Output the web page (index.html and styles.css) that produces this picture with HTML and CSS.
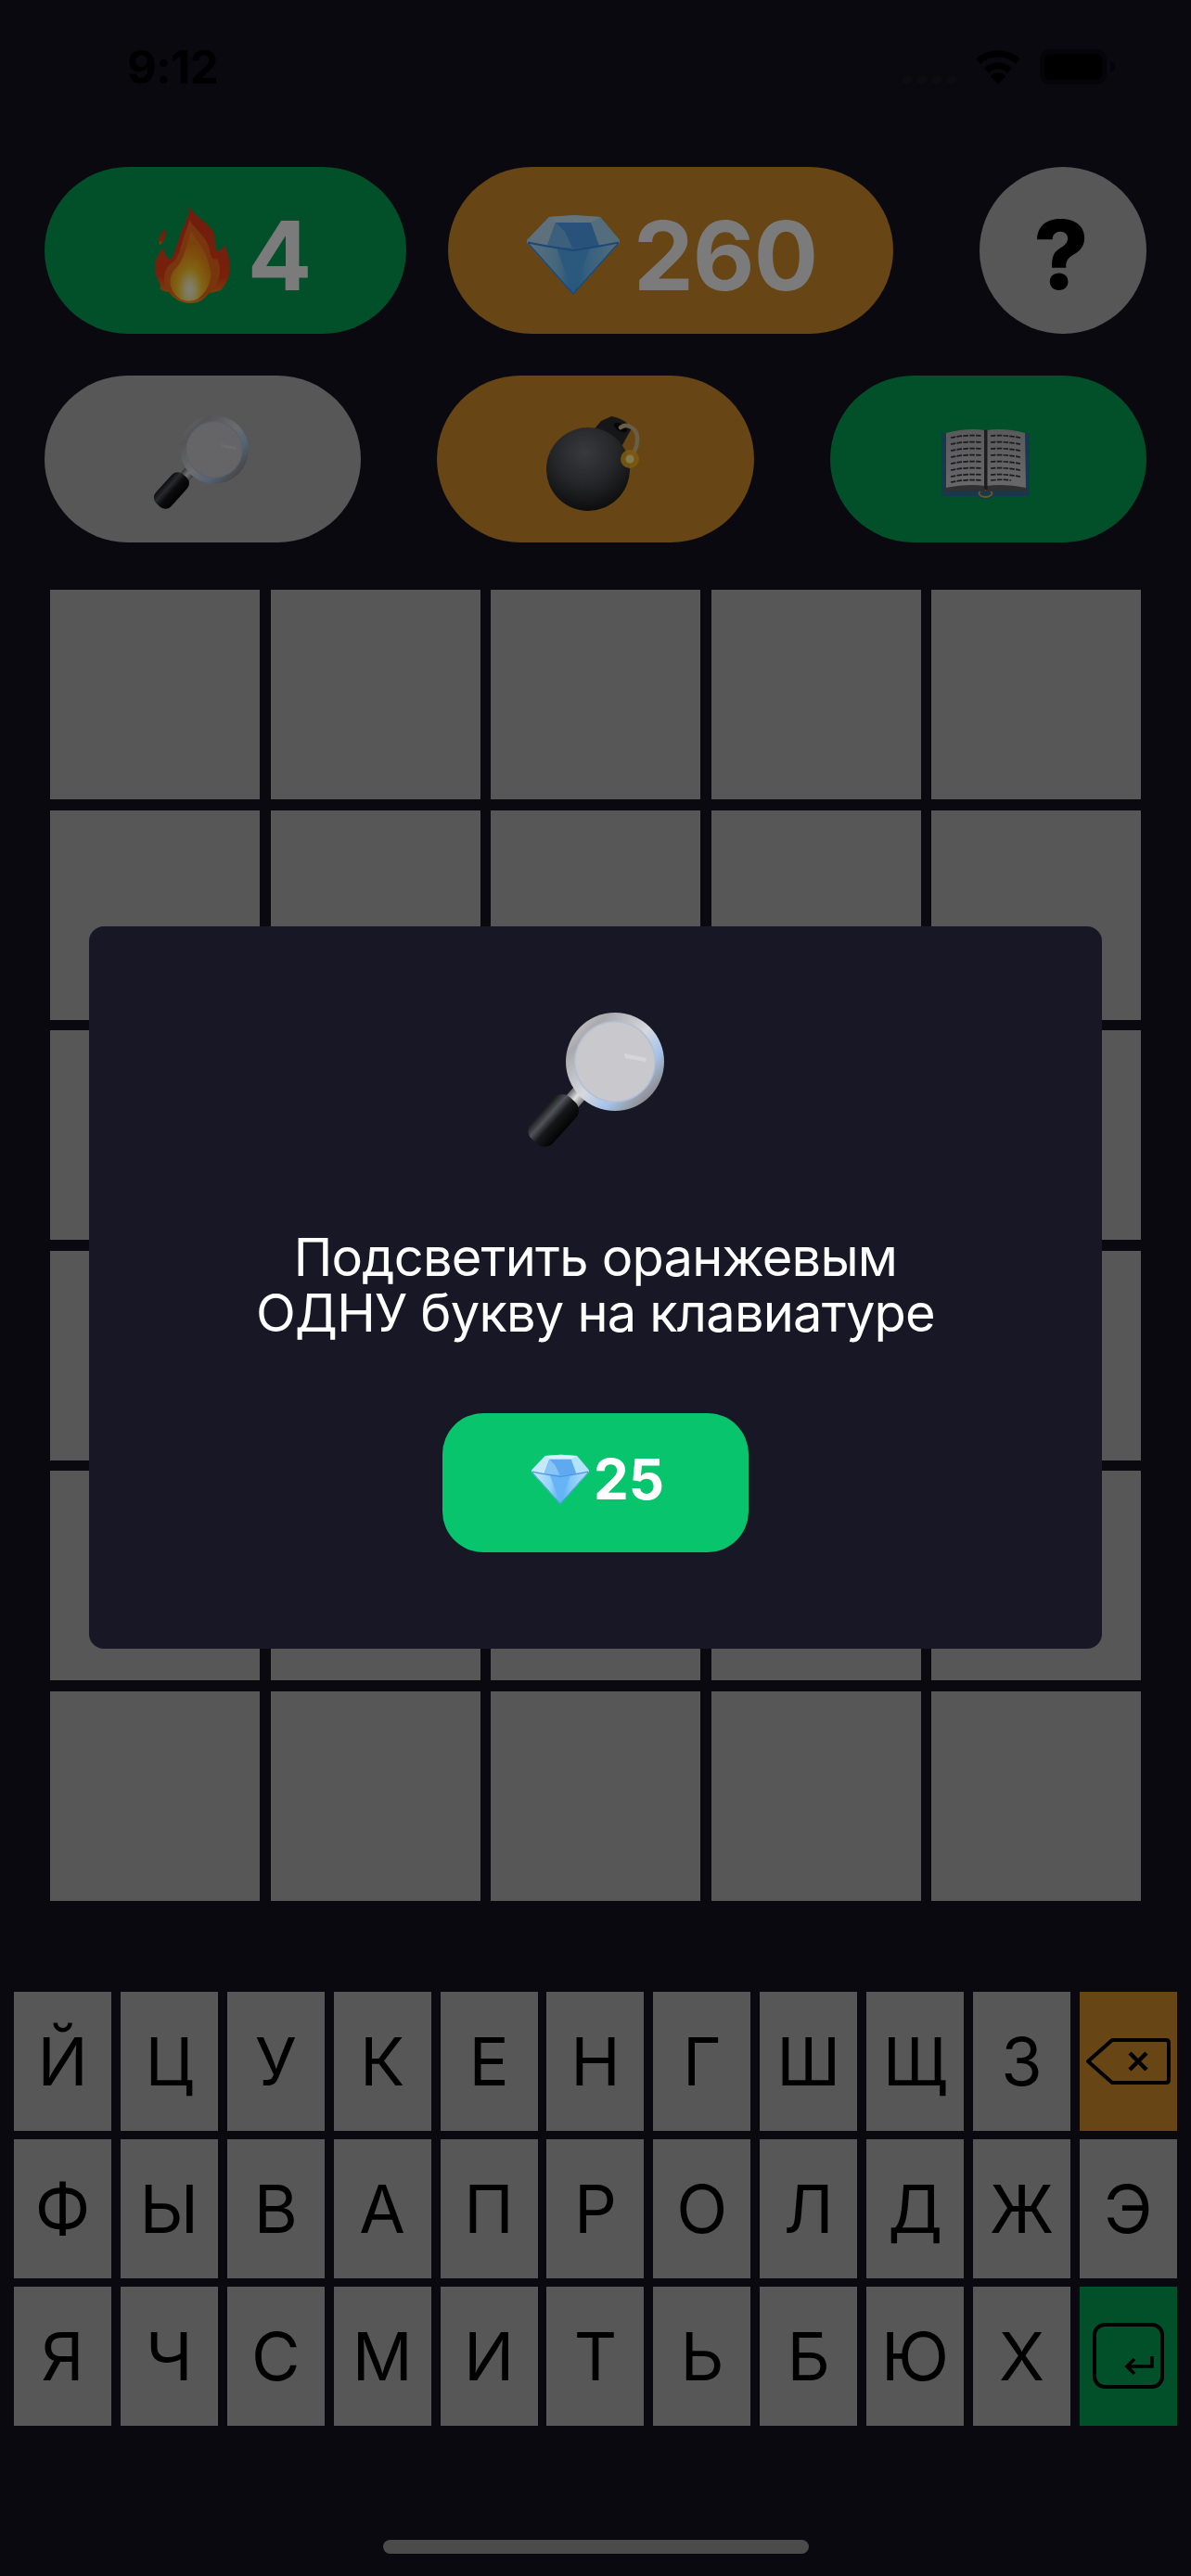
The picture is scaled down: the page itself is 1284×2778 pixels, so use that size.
FILE: index.html
```html
<!DOCTYPE html>
<html lang="ru">
<head>
<meta charset="utf-8">
<title>Подсказка</title>
<link rel="stylesheet" href="styles.css">
</head>
<body>
<svg class="defs" aria-hidden="true">
  <defs>
    <radialGradient id="flameCore" cx="48%" cy="84%" r="66%">
      <stop offset="0" stop-color="#fffdf0"/><stop offset=".2" stop-color="#fff0a8"/><stop offset=".45" stop-color="#ffc928"/><stop offset=".8" stop-color="#fb9a16"/><stop offset="1" stop-color="#f5851a"/>
    </radialGradient>
    <linearGradient id="flameOuter" x1="0" y1="0" x2="0" y2="1">
      <stop offset="0" stop-color="#e23a1a"/><stop offset=".72" stop-color="#ee3f18"/><stop offset="1" stop-color="#ff9a12"/>
    </linearGradient>
    <linearGradient id="gemLow" x1="0" y1="0" x2="1" y2="0">
      <stop offset="0" stop-color="#c6e9fe"/><stop offset=".32" stop-color="#99d4f9"/><stop offset=".5" stop-color="#55aef6"/><stop offset=".68" stop-color="#82c8f8"/><stop offset="1" stop-color="#b6e1fc"/>
    </linearGradient>
    <linearGradient id="steel" x1="0" y1="0" x2="1" y2="1">
      <stop offset="0" stop-color="#dadadd"/><stop offset=".22" stop-color="#a9a9ad"/><stop offset=".5" stop-color="#d5d9de"/><stop offset=".68" stop-color="#a4c4ea"/><stop offset=".85" stop-color="#8f8f90"/><stop offset="1" stop-color="#b3b0ad"/>
    </linearGradient>
    <linearGradient id="neck" x1="0" y1="0" x2="1" y2="0">
      <stop offset="0" stop-color="#6d6d70"/><stop offset=".5" stop-color="#e0e0e2"/><stop offset="1" stop-color="#7c7c7e"/>
    </linearGradient>
    <linearGradient id="handle" x1="0" y1="0" x2="1" y2="0">
      <stop offset="0" stop-color="#1a1a1c"/><stop offset=".28" stop-color="#50535a"/><stop offset=".55" stop-color="#17171a"/><stop offset="1" stop-color="#030303"/>
    </linearGradient>
    <radialGradient id="bombBall" cx="46%" cy="30%" r="74%">
      <stop offset="0" stop-color="#6e7278"/><stop offset=".5" stop-color="#4a4d52"/><stop offset="1" stop-color="#141416"/>
    </radialGradient>
    <linearGradient id="page" x1="0" y1="0" x2="0" y2="1">
      <stop offset="0" stop-color="#b4b4b9"/><stop offset="1" stop-color="#cfcfd3"/>
    </linearGradient>

    <symbol id="i-flame" viewBox="0 0 81 104">
      <path fill="url(#flameOuter)" d="M37.500 0C42 10 54 15 61 24C66 31 65 40 66 48C70 48 73 45 75 41C79 50 81 58 81 66C81 76 76 84 71 90C66 91 61 93 58 93C53 101 45 104 37 104C29 104 20 99 15 92C11 92 8 90 5 88C7 86 6 84 4 80C1 75 0 70 0 64C0 56 5 50 9 44C10 50 12 55 17 57C22 50 24 38 29 26C32 18 37 10 37.500 0Z"/>
      <path fill="url(#flameOuter)" d="M11 24C13 29 11 37 5 41C3 36 6 28 11 24Z"/>
      <path fill="#ef6a1c" d="M37 14C44 26 56 32 59 46C60 54 62 58 67 56C72 66 71 76 64 87C56 98 46 102 37 102C27 102 16 96 11 84C8 74 12 64 19 60C25 56 27 46 30 36C32 28 36 22 37 14Z"/>
      <path fill="url(#flameCore)" d="M39 26C45 38 56 46 58 62C64 74 58 90 48 98C42 103 31 103 25 98C15 90 14 76 21 68C30 60 34 44 39 26Z"/>
    </symbol>

    <symbol id="i-gem" viewBox="0 0 100 86">
      <polygon fill="#a0daf9" points="0,27 24,2 51,0 79,2 100,27 100,30 50,38 0,30"/>
      <polygon fill="#c7e9fd" points="0,27 24,2 31,8 22,33 0,30"/>
      <polygon fill="#b4e1fc" points="79,2 100,27 100,30 78,33 69,8"/>
      <polygon fill="#d6f0fe" points="24,2 51,0 79,2 69,8 31,8"/>
      <polygon fill="#5fa9ee" points="31,8 69,8 78,33 50,37 22,33"/>
      <polygon fill="#88c4f4" points="31,8 22,33 50,37 41,18"/>
      <polygon fill="url(#gemLow)" points="0,30 22,33 50,38 78,33 100,30 50,86"/>
      <polygon fill="#66b4f5" points="32,35 68,35 50,84"/>
      <path fill="none" stroke="#4a93e6" stroke-width="2" d="M1 29.500L22 33.500L50 38L78 33.500L99 29.500"/>
      <path fill="none" stroke="#4a93e6" stroke-width="1.500" d="M1 30L50 85L99 30"/>
    </symbol>

    <symbol id="i-lens" viewBox="0 0 148 148">
      <rect x="45" y="76" width="18" height="28" fill="url(#neck)" transform="rotate(42 54 90)"/>
      <circle cx="95" cy="53" r="53" fill="url(#steel)"/>
      <circle cx="95" cy="53" r="44" fill="#b4c0d2"/>
      <circle cx="95" cy="53" r="42.500" fill="#c9c9cd"/>
      <path fill="#dadadd" d="M105 44L129 49L128 53L106 49Z" opacity=".8"/>
      <rect x="13" y="86" width="32" height="61" rx="12" fill="url(#handle)" transform="rotate(42 29 116)"/>
    </symbol>

    <symbol id="i-bomb" viewBox="0 0 101 102">
      <path fill="#2c2d31" d="M48 18L59 5L70 0C78 1 88 6 92 13L78 38Z"/>
      <ellipse cx="80" cy="12" rx="8" ry="4" transform="rotate(30 80 12)" fill="#0a0a0c"/>
      <circle cx="45" cy="57" r="45" fill="url(#bombBall)"/>
      <path fill="none" stroke="#d6bc8c" stroke-width="4.500" stroke-linecap="round" d="M80 12C86 7 97 12 98 22C99 32 95 38 91 45"/>
      <circle cx="90" cy="46" r="10" fill="#f6b21c" opacity=".9"/>
      <circle cx="90" cy="46" r="4.500" fill="#fff3a8"/>
    </symbol>

    <symbol id="i-book" viewBox="0 0 95 76">
      <path fill="#2f6f9f" d="M0 5H95V73H56C54 77 41 77 39 73H0Z"/>
      <ellipse cx="47.500" cy="70" rx="7" ry="4" fill="none" stroke="#d9b028" stroke-width="1.800"/>
      <path fill="#5f5f62" d="M4 62L47 60V68H3ZM48 60L91 62L92 68H48Z"/>
      <path fill="url(#page)" d="M5 5C20 1 34 0 47 2V62C34 60 20 61 5 64Z"/>
      <path fill="url(#page)" d="M48.500 2C61 0 76 1 90 5L91 64C76 61 61 60 48.500 62Z"/>
      <path fill="#3a3a3d" d="M46 1.500H49.500V66H46Z"/>
      <path fill="none" stroke="#333338" stroke-width="1.700" stroke-dasharray="5.500 1.300" d="M10 10C20 8 32 7 43 8M10 17C20 15 32 14 43 15M10 24C20 22 32 21 43 22M10 31C20 29 32 28 43 29M10 38C20 36 32 35 43 36M10 45C20 43 32 42 43 43M10 52C20 50 32 49 43 50M10 58C20 56 32 55 43 56M53 8C62 7 74 8 85 10M53 15C62 14 74 15 85 17M53 22C62 21 74 22 85 24M53 29C62 28 74 29 85 31M53 36C62 35 74 36 85 38M53 43C62 42 74 43 85 45M53 50C62 49 74 50 85 52M53 56C62 55 70 55 75 56"/>
    </symbol>
  </defs>
</svg>

<main class="screen">
  <header class="status">
    <span class="time">9:12</span>
    <div class="status-icons">
      <div class="signal"><i></i><i></i><i></i><i></i></div>
      <svg class="wifi" viewBox="0 0 50 37"><path fill="none" stroke="#000" stroke-width="7" d="M3.600 12.200A32 32 0 0 1 46.400 12.200"/><path fill="none" stroke="#000" stroke-width="7" d="M12.300 21.900A19 19 0 0 1 37.700 21.900"/><path fill="#000" d="M25 37L17 28A11 11 0 0 1 33 28Z"/></svg>
      <div class="battery"><div class="battery-fill"></div></div>
      <div class="battery-tip"></div>
    </div>
  </header>

  <section class="row-stats">
    <div class="pill pill-green stat-streak">
      <svg class="icon icon-dim flame"><use href="#i-flame"/></svg>
      <span class="stat-num">4</span>
    </div>
    <div class="pill pill-orange stat-gems">
      <svg class="icon icon-dim gem-big"><use href="#i-gem"/></svg>
      <span class="stat-num">260</span>
    </div>
    <div class="pill pill-grey help"><span class="help-mark">?</span></div>
  </section>

  <section class="row-tools">
    <div class="pill pill-grey"><svg class="icon icon-dim lens-small"><use href="#i-lens"/></svg></div>
    <div class="pill pill-orange"><svg class="icon icon-dim bomb"><use href="#i-bomb"/></svg></div>
    <div class="pill pill-green"><svg class="icon icon-dim book"><use href="#i-book"/></svg></div>
  </section>

  <section class="board">
    <div class="cell"></div><div class="cell"></div><div class="cell"></div><div class="cell"></div><div class="cell"></div>
    <div class="cell"></div><div class="cell"></div><div class="cell"></div><div class="cell"></div><div class="cell"></div>
    <div class="cell"></div><div class="cell"></div><div class="cell"></div><div class="cell"></div><div class="cell"></div>
    <div class="cell"></div><div class="cell"></div><div class="cell"></div><div class="cell"></div><div class="cell"></div>
    <div class="cell"></div><div class="cell"></div><div class="cell"></div><div class="cell"></div><div class="cell"></div>
    <div class="cell"></div><div class="cell"></div><div class="cell"></div><div class="cell"></div><div class="cell"></div>
  </section>

  <section class="keyboard">
    <div class="key">Й</div><div class="key">Ц</div><div class="key">У</div><div class="key">К</div><div class="key">Е</div><div class="key">Н</div><div class="key">Г</div><div class="key">Ш</div><div class="key">Щ</div><div class="key">З</div>
    <div class="key key-orange">
      <svg class="key-back" viewBox="0 0 91 50"><path fill="none" stroke="#000" stroke-width="4" stroke-linejoin="round" d="M2 25L28 2H86Q89 2 89 5V45Q89 48 86 48H28Z"/><path fill="none" stroke="#000" stroke-width="4.500" d="M47 16L65 34M65 16L47 34"/></svg>
    </div>
    <div class="key">Ф</div><div class="key">Ы</div><div class="key">В</div><div class="key">А</div><div class="key">П</div><div class="key">Р</div><div class="key">О</div><div class="key">Л</div><div class="key">Д</div><div class="key">Ж</div><div class="key">Э</div>
    <div class="key">Я</div><div class="key">Ч</div><div class="key">С</div><div class="key">М</div><div class="key">И</div><div class="key">Т</div><div class="key">Ь</div><div class="key">Б</div><div class="key">Ю</div><div class="key">Х</div>
    <div class="key key-green">
      <svg class="key-enter" viewBox="0 0 77 71"><rect x="2" y="2" width="73" height="67" rx="11" fill="none" stroke="#000" stroke-width="4"/><path fill="none" stroke="#000" stroke-width="3.500" d="M64 36V47H37M45 39L37 47L45 55"/></svg>
    </div>
  </section>

  <div class="home-bar"></div>

  <div class="dialog">
    <svg class="icon lens-big"><use href="#i-lens"/></svg>
    <p class="dialog-text">Подсветить оранжевым<br>ОДНУ букву на клавиатуре</p>
    <button class="buy">
      <svg class="icon gem-small"><use href="#i-gem"/></svg>
      <span>25</span>
    </button>
  </div>
</main>
</body>
</html>
```

FILE: styles.css
```css
* { box-sizing: border-box; }

html, body {
  margin: 0;
  padding: 0;
  background: #09090f;
}

.defs {
  position: absolute;
  width: 0;
  height: 0;
}

.screen {
  position: relative;
  width: 1284px;
  height: 2778px;
  overflow: hidden;
  background: #09090f;
  font-family: Inter, "Liberation Sans", sans-serif;
}

/* status bar */
.status {
  height: 180px;
  padding: 43px 82px 0 137px;
  display: flex;
  justify-content: space-between;
  align-items: flex-start;
}

.time {
  font-size: 49px;
  line-height: 60px;
  font-weight: 700;
  letter-spacing: -.5px;
  color: #000;
}

.status-icons {
  display: flex;
  align-items: flex-start;
  padding-top: 10px;
}

.signal {
  display: flex;
  gap: 6px;
  margin: 29px 20px 0 0;
}

.signal i {
  width: 10px;
  height: 8px;
  border-radius: 3px;
  background: #0c0c11;
}

.wifi {
  width: 50px;
  height: 37px;
  margin: 1px 20px 0 0;
}

.battery {
  width: 72px;
  height: 38px;
  padding: 5px;
  border-radius: 11px;
  background: #050509;
}

.battery-fill {
  width: 100%;
  height: 100%;
  border-radius: 6px;
  background: #000;
}

.battery-tip {
  width: 5px;
  height: 12px;
  margin: 13px 0 0 4px;
  border-radius: 0 6px 6px 0;
  background: #050509;
}

/* pills */
.pill {
  height: 180px;
  border-radius: 90px;
  display: flex;
  align-items: center;
  justify-content: center;
}

.pill-green { background: #025029; }
.pill-orange { background: #674514; }
.pill-grey { background: #575757; }

.row-stats {
  display: flex;
  padding-left: 48px;
}

.stat-streak {
  width: 390px;
  margin-right: 45px;
  padding: 10px 0 0 16px;
  gap: 19px;
}

.stat-gems {
  width: 480px;
  margin-right: 93px;
  padding: 10px 0 0 3px;
  gap: 15px;
}

.help {
  width: 180px;
  padding: 8px 4px 0 0;
}

.stat-num {
  font-size: 103px;
  line-height: 1;
  font-weight: 700;
  letter-spacing: -1px;
  color: #7b7b7b;
}

.help-mark {
  font-size: 103px;
  line-height: 1;
  font-weight: 800;
  color: #000;
}

.row-tools {
  margin-top: 45px;
  padding: 0 48px;
  display: grid;
  grid-template-columns: repeat(3, 1fr);
  gap: 82px;
}

.row-tools .pill { padding: 9px 5px 0 0; }

/* emoji drawings */
.icon { display: block; flex: none; }
.icon-dim { filter: brightness(.5); }
.flame { width: 81px; height: 104px; }
.gem-big { width: 100px; height: 86px; filter: brightness(.48) saturate(1.2); }
.lens-small { width: 103px; height: 103px; }
.bomb { width: 101px; height: 102px; }
.book { width: 95px; height: 76px; }
.lens-big { width: 148px; height: 148px; }
.gem-small { width: 62px; height: 55px; }

/* board */
.board {
  margin: 51px 54px 0;
  display: grid;
  grid-template-columns: repeat(5, 1fr);
  grid-auto-rows: 226px;
  gap: 11.5px;
}

.cell { background: #575757; }

/* keyboard */
.keyboard {
  margin-top: 98px;
  padding-left: 15px;
  display: grid;
  grid-template-columns: repeat(11, 105px);
  grid-auto-rows: 150px;
  column-gap: 9.9px;
  row-gap: 9px;
}

.key {
  display: flex;
  align-items: center;
  justify-content: center;
  background: #575757;
  color: #000;
  font-size: 72px;
  line-height: 1;
  font-weight: 400;
}

.key-orange { background: #674514; }
.key-green { background: #025029; }

.key-back { width: 91px; height: 50px; }
.key-enter { width: 77px; height: 71px; }

.home-bar {
  width: 459px;
  height: 15px;
  margin: 123px auto 0;
  border-radius: 8px;
  background: #4b4b4b;
}

/* dialog */
.dialog {
  position: absolute;
  left: 96px;
  top: 999px;
  width: 1092px;
  height: 779px;
  padding-top: 93px;
  border-radius: 16px;
  background: #181725;
  display: flex;
  flex-direction: column;
  align-items: center;
}

.dialog-text {
  margin: 86px 0 0;
  font-size: 56px;
  line-height: 60px;
  font-weight: 400;
  letter-spacing: -.8px;
  text-align: center;
  color: #fff;
}

.buy {
  width: 330px;
  height: 150px;
  margin-top: 78px;
  padding: 0 0 8px 5px;
  border: 0;
  border-radius: 44px;
  background: #08c46c;
  display: flex;
  align-items: center;
  justify-content: center;
  gap: 5px;
  font-family: inherit;
  font-size: 60px;
  line-height: 1;
  font-weight: 700;
  color: #fff;
}
```
